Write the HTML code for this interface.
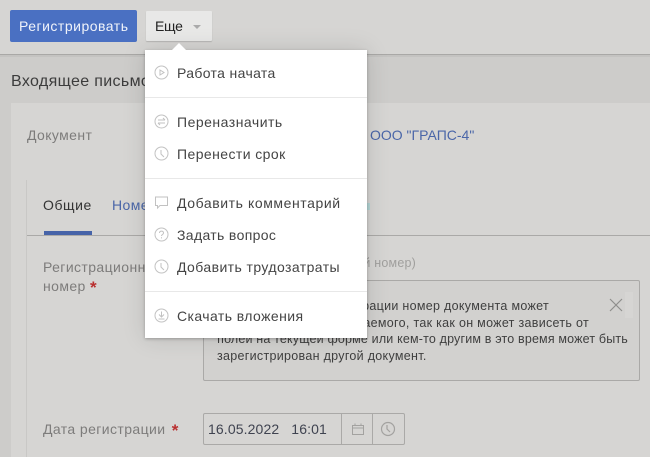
<!DOCTYPE html>
<html><head><meta charset="utf-8"><style>
html,body{margin:0;padding:0;background:#cdccca}
#p{position:relative;width:650px;height:457px;overflow:hidden;background:#cdccca;font-family:"Liberation Sans",sans-serif;font-size:14px;color:#3a3a3a}
#p div{position:absolute}
.t{white-space:nowrap;line-height:18px}
.m{left:177px;color:#444;font-size:14px;letter-spacing:.42px}
.l{color:#7d7c7b;letter-spacing:.4px}
.a{font-size:12.5px;color:#3f3f3f;letter-spacing:.3px}
.r{color:#b92f2f;font-size:17px;font-weight:bold;line-height:14px;vertical-align:-2px}
.s{left:145px;width:222px;height:1px;background:#e8e8e8}
svg{position:absolute;fill:none}
</style></head><body><div id="p">
<div style="left:0;top:0;width:650px;height:54px;background:#d6d5d3"></div>
<div style="left:0;top:54px;width:650px;height:1px;background:#a9a8a6"></div>
<div style="left:0;top:55px;width:650px;height:2px;background:#c4c3c1"></div>
<div style="left:11px;top:103px;width:639px;height:354px;background:#d6d5d3"></div>
<div style="left:26px;top:180px;width:1px;height:277px;background:#c9c8c6"></div>
<div style="left:10px;top:10px;width:127px;height:32px;background:#4a70c2;border-radius:2px"></div>
<div class="t" style="left:19px;top:17px;color:#f0f3fa;letter-spacing:.5px">Регистрировать</div>
<div style="left:146px;top:11px;width:66px;height:30px;background:#e8e8e7;border-radius:1px;box-shadow:0 1px 1px #b5b4b2"></div>
<div class="t" style="left:155px;top:17px;color:#222;letter-spacing:-.3px">Еще</div>
<div style="left:193px;top:25px;width:0;height:0;border:4px solid transparent;border-top:4px solid #aaa;border-bottom:0"></div>
<div class="t" style="left:11px;top:73px;font-size:16px;color:#3c3c3c;letter-spacing:.35px">Входящее письмо</div>
<div class="t l" style="left:27px;top:126px">Документ</div>
<div class="t" style="left:370px;top:126px;color:#4a66a8;letter-spacing:0">ООО "ГРАПС-4"</div>
<div class="t" style="left:43px;top:196px;color:#333;letter-spacing:.55px">Общие</div>
<div class="t" style="left:112px;top:196px;color:#4a66a8;letter-spacing:.4px">Номер</div>
<div style="left:27px;top:235px;width:623px;height:1px;background:#aaa9a7"></div>
<div style="left:44px;top:231px;width:48px;height:4px;background:#4663a8"></div>
<div class="t l" style="left:43px;top:258px">Регистрационный</div>
<div class="t l" style="left:43px;top:277px">номер <span class="r">*</span></div>
<div class="t" style="right:234px;top:254px;color:#a09f9d;font-size:12.5px;letter-spacing:.2px">ый номер)</div>
<div style="left:203px;top:280px;width:435px;height:99px;border:1px solid #aaa9a7;border-radius:2px;background:#d2d1cf"></div>
<div class="t a" style="right:101px;top:297px">При регистрации номер документа может</div>
<div class="t a" style="right:61px;top:314px">отличаться от ожидаемого, так как он может зависеть от</div>
<div class="t a" style="right:22px;top:330px;letter-spacing:.17px">полей на текущей форме или кем-то другим в это время может быть</div>
<div class="t a" style="left:217px;top:347px">зарегистрирован другой документ.</div>
<div style="left:625px;top:292px;width:8px;height:26px;background:#d6d5d3"></div>
<svg style="left:609px;top:298px" width="14" height="14" stroke="#8f8e8c" stroke-width="1.2"><path d="M1 1L13 13M13 1L1 13"/></svg>
<div class="t l" style="left:43px;top:420px">Дата регистрации <span class="r" style="margin-left:2px">*</span></div>
<div style="left:203px;top:413px;width:200px;height:30px;border:1px solid #aaa9a7;border-radius:2px"></div>
<div style="left:341px;top:413px;width:1px;height:31px;background:#aaa9a7"></div>
<div style="left:372px;top:413px;width:1px;height:31px;background:#aaa9a7"></div>
<div class="t" style="left:208px;top:420px;color:#3f4350;letter-spacing:.12px;white-space:pre">16.05.2022   16:01</div>
<svg style="left:351px;top:422px" width="14" height="14" stroke="#a3a2a0"><path d="M1.5 3.5H12.5V12.5H1.5ZM1.5 6H12.5M4 1.5V3.5M10 1.5V3.5"/></svg>
<svg style="left:380px;top:421px" width="16" height="16" stroke="#a3a2a0" stroke-width="1.2"><circle cx="8" cy="8" r="6.5"/><path d="M7 4V8L10 11"/></svg>
<div style="left:367px;top:203px;width:3px;height:7px;background:#b5d6d6"></div>

<div style="left:145px;top:50px;width:222px;height:288px;background:#fff;box-shadow:0 1px 3px rgba(0,0,0,.25),0 0 22px rgba(0,0,0,.13)"></div>
<div style="left:172px;top:43px;width:0;height:0;border:7px solid transparent;border-bottom:7px solid #fff;border-top:0"></div>
<div class="s" style="top:97px"></div><div class="s" style="top:178px"></div><div class="s" style="top:291px"></div>
<div class="t m" style="top:64px;letter-spacing:.35px">Работа начата</div>
<div class="t m" style="top:113px;letter-spacing:.5px">Переназначить</div>
<div class="t m" style="top:145px">Перенести срок</div>
<div class="t m" style="top:194px;letter-spacing:.58px">Добавить комментарий</div>
<div class="t m" style="top:226px;letter-spacing:.35px">Задать вопрос</div>
<div class="t m" style="top:258px">Добавить трудозатраты</div>
<div class="t m" style="top:307px">Скачать вложения</div>
<svg style="left:154px;top:65px" width="15" height="15" stroke="#c2c2c2"><circle cx="7.5" cy="7.5" r="6.5"/><path d="M6 5L10 7.5L6 10Z"/></svg>
<svg style="left:154px;top:114px" width="15" height="15" stroke="#c2c2c2"><circle cx="7.5" cy="7.5" r="6.5"/><path d="M4 6H11M9 4L11 6M11 9H4M6 11L4 9"/></svg>
<svg style="left:154px;top:146px" width="15" height="15" stroke="#c2c2c2"><circle cx="7.5" cy="7.5" r="6.5"/><path d="M7 4V8L10 11"/></svg>
<svg style="left:154px;top:195px" width="15" height="15" stroke="#c2c2c2"><path d="M1.5 2H13.5V10.5H6L3.5 13V10.5H1.5Z"/></svg>
<svg style="left:154px;top:227px" width="15" height="15" stroke="#c2c2c2"><circle cx="7.5" cy="7.5" r="6.5"/><path d="M5.5 6C5.5 3.5 9.5 3.5 9.5 6C9.5 7.5 7.5 7.5 7.5 9M7.5 10.2V11.4"/></svg>
<svg style="left:154px;top:259px" width="15" height="15" stroke="#c2c2c2"><circle cx="7.5" cy="7.5" r="6.5"/><path d="M7 4V8L10 11"/></svg>
<svg style="left:154px;top:308px" width="15" height="15" stroke="#c2c2c2"><circle cx="7.5" cy="7.5" r="6.5"/><path d="M7.5 3.5V8.5M5 6.5L7.5 9L10 6.5M4.5 11H10.5"/></svg>
</div></body></html>
